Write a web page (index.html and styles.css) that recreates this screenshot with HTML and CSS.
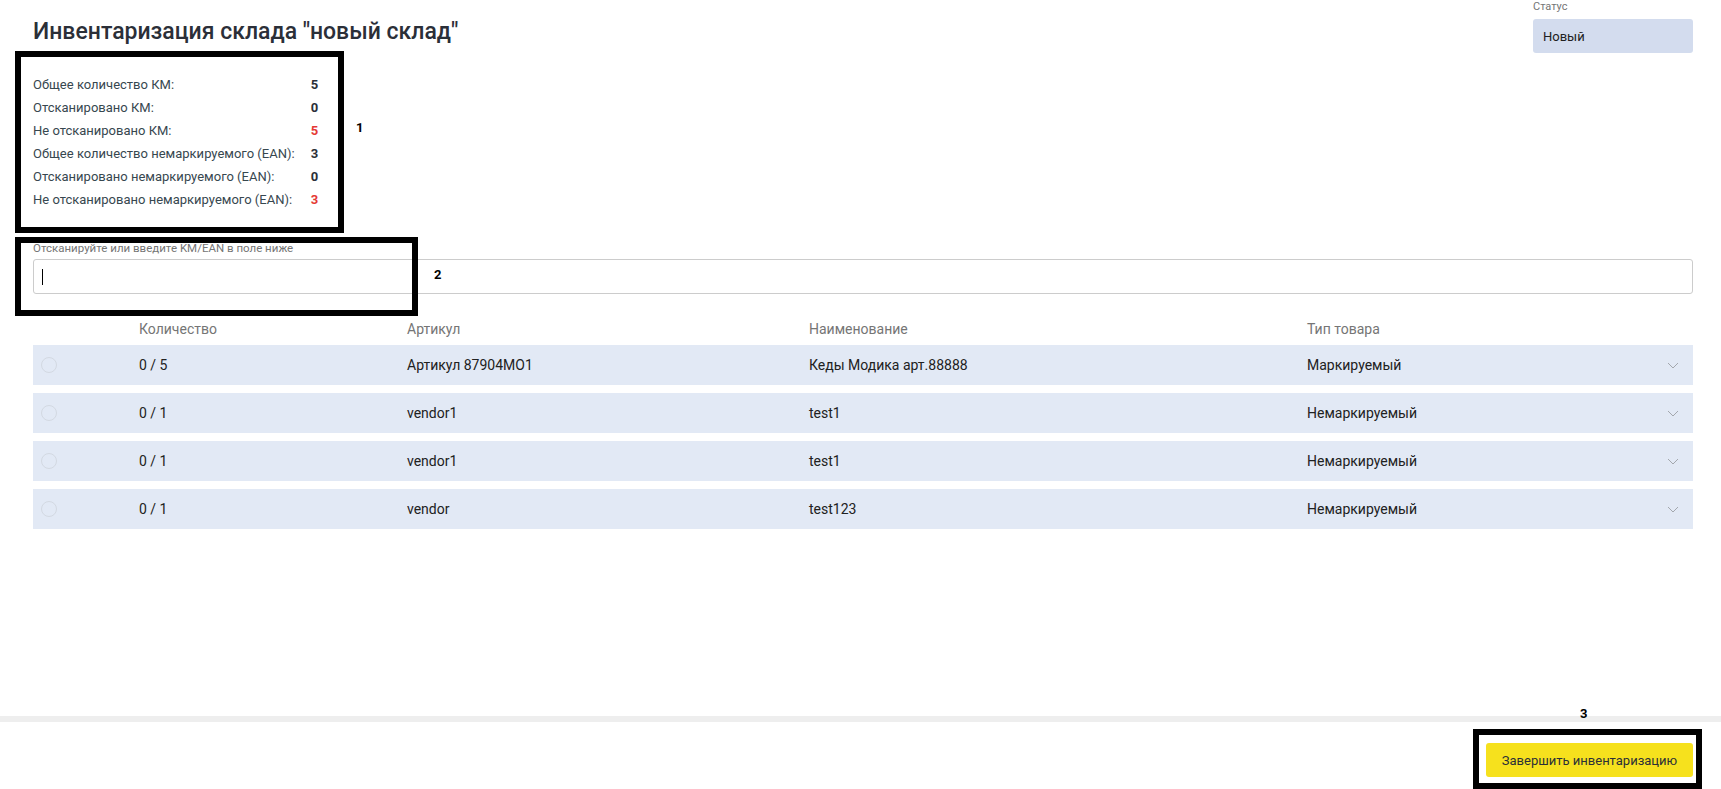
FILE: index.html
```html
<!DOCTYPE html>
<html lang="ru">
<head>
    <meta charset="UTF-8">
    <meta name="viewport" content="width=device-width, initial-scale=1.0">
    <title>Инвентаризация склада</title>
    <link rel="stylesheet" href="styles.css">
</head>
<body>
    <div class="page">
        <main class="content">
            <div class="header">
                <h1>Инвентаризация склада "новый склад"</h1>
                <div class="status">
                    <div class="status-label">Статус</div>
                    <div class="status-value">Новый</div>
                </div>
            </div>

            <div class="stats">
                <span>Общее количество КМ:</span><b>5</b>
                <span>Отсканировано КМ:</span><b>0</b>
                <span>Не отсканировано КМ:</span><b class="red">5</b>
                <span>Общее количество немаркируемого (EAN):</span><b>3</b>
                <span>Отсканировано немаркируемого (EAN):</span><b>0</b>
                <span>Не отсканировано немаркируемого (EAN):</span><b class="red">3</b>
            </div>

            <div class="scan">
                <label for="scanInput">Отсканируйте или введите KM/EAN в поле ниже</label>
                <div class="scan-input" id="scanInput"><span class="caret"></span></div>
            </div>

            <div class="table">
                <div class="table-head">
                    <span></span>
                    <span>Количество</span>
                    <span>Артикул</span>
                    <span>Наименование</span>
                    <span>Тип товара</span>
                </div>
                <div class="table-row">
                    <span class="radio"></span>
                    <span>0 / 5</span>
                    <span>Артикул 87904MO1</span>
                    <span>Кеды Модика арт.88888</span>
                    <span class="type">Маркируемый
                        <svg class="chevron" width="12" height="7" viewBox="0 0 12 7"><polyline points="1,1 6,6 11,1" fill="none" stroke="#a3a7ad" stroke-width="1"/></svg>
                    </span>
                </div>
                <div class="table-row">
                    <span class="radio"></span>
                    <span>0 / 1</span>
                    <span>vendor1</span>
                    <span>test1</span>
                    <span class="type">Немаркируемый
                        <svg class="chevron" width="12" height="7" viewBox="0 0 12 7"><polyline points="1,1 6,6 11,1" fill="none" stroke="#a3a7ad" stroke-width="1"/></svg>
                    </span>
                </div>
                <div class="table-row">
                    <span class="radio"></span>
                    <span>0 / 1</span>
                    <span>vendor1</span>
                    <span>test1</span>
                    <span class="type">Немаркируемый
                        <svg class="chevron" width="12" height="7" viewBox="0 0 12 7"><polyline points="1,1 6,6 11,1" fill="none" stroke="#a3a7ad" stroke-width="1"/></svg>
                    </span>
                </div>
                <div class="table-row">
                    <span class="radio"></span>
                    <span>0 / 1</span>
                    <span>vendor</span>
                    <span>test123</span>
                    <span class="type">Немаркируемый
                        <svg class="chevron" width="12" height="7" viewBox="0 0 12 7"><polyline points="1,1 6,6 11,1" fill="none" stroke="#a3a7ad" stroke-width="1"/></svg>
                    </span>
                </div>
            </div>
        </main>

        <footer class="footer">
            <button class="finish-btn">Завершить инвентаризацию</button>
        </footer>
    </div>

    <!-- annotation overlay -->
    <div class="mark mark-1"></div>
    <div class="mark mark-2"></div>
    <div class="mark mark-3"></div>
    <span class="mark-num num-1">1</span>
    <span class="mark-num num-2">2</span>
    <span class="mark-num num-3">3</span>
</body>
</html>
```

FILE: styles.css
```css
body {
    margin: 0;
    font-family: Roboto, "Liberation Sans", Arial, sans-serif;
    color: #212121;
    background: #fff;
}

.page {
    display: flex;
    flex-direction: column;
    min-height: 100vh;
}

.content {
    flex: 1;
    padding: 0 28px 0 33px;
}

.header {
    display: flex;
    justify-content: space-between;
    align-items: flex-start;
}

h1 {
    margin: 18px 0 0;
    font-size: 23px;
    line-height: 28px;
    font-weight: 500;
    color: #2b2f38;
}

.status {
    width: 160px;
}

.status-label {
    font-size: 11px;
    line-height: 14px;
    color: #757575;
}

.status-value {
    margin-top: 5px;
    height: 34px;
    padding: 0 10px;
    display: flex;
    align-items: center;
    background: #d3dcee;
    border-radius: 3px;
    font-size: 13px;
    color: #212121;
}

.stats {
    display: grid;
    grid-template-columns: max-content max-content;
    column-gap: 16px;
    margin-top: 20px;
    font-size: 13px;
    line-height: 23px;
    color: #37474f;
}

.stats b {
    font-weight: 700;
    color: #2b2f38;
}

.stats b.red {
    color: #e53935;
}

.scan {
    margin-top: 30px;
}

.scan label {
    display: block;
    font-size: 11.5px;
    line-height: 14px;
    color: #757575;
}

.scan-input {
    margin-top: 4px;
    height: 35px;
    box-sizing: border-box;
    border: 1px solid #cccccc;
    border-radius: 3px;
    display: flex;
    align-items: center;
    padding-left: 8px;
}

.caret {
    width: 1px;
    height: 16px;
    background: #000;
}

.table {
    margin-top: 27px;
    display: flex;
    flex-direction: column;
    gap: 8px;
}

.table-head,
.table-row {
    display: grid;
    grid-template-columns: 106px 268px 402px 498px 1fr;
    align-items: center;
    font-size: 14px;
    padding-right: 14px;
}

.table-head {
    line-height: 16px;
    color: #757575;
}

.table-row {
    height: 40px;
    background: #e2e9f5;
    color: #212121;
}

.radio {
    width: 16px;
    height: 16px;
    box-sizing: border-box;
    margin-left: 8px;
    border: 1px solid #d3d9e2;
    border-radius: 50%;
}

.type {
    display: flex;
    justify-content: space-between;
    align-items: center;
}

.chevron {
    display: block;
}

.footer {
    border-top: 6px solid #eeeeee;
    display: flex;
    justify-content: flex-end;
    padding: 21px 28px 12px 0;
}

.finish-btn {
    height: 34px;
    width: 207px;
    border: none;
    border-radius: 3px;
    background: #f6e11d;
    font-family: inherit;
    font-size: 13px;
    color: #2b2f38;
    cursor: pointer;
}

/* annotation boxes drawn over the screenshot */
.mark {
    position: absolute;
    border: 6px solid #000;
    box-sizing: border-box;
    pointer-events: none;
}

.mark-1 { left: 15px; top: 51px; width: 329px; height: 182px; }
.mark-2 { left: 15px; top: 237px; width: 403px; height: 79px; }
.mark-3 { left: 1473px; top: 729px; width: 229px; height: 60px; }

.mark-num {
    position: absolute;
    font-size: 13px;
    font-weight: 700;
    color: #000;
    line-height: 14px;
}

.num-1 { left: 356px; top: 121px; }
.num-2 { left: 434px; top: 268px; }
.num-3 { left: 1580px; top: 707px; }
```
